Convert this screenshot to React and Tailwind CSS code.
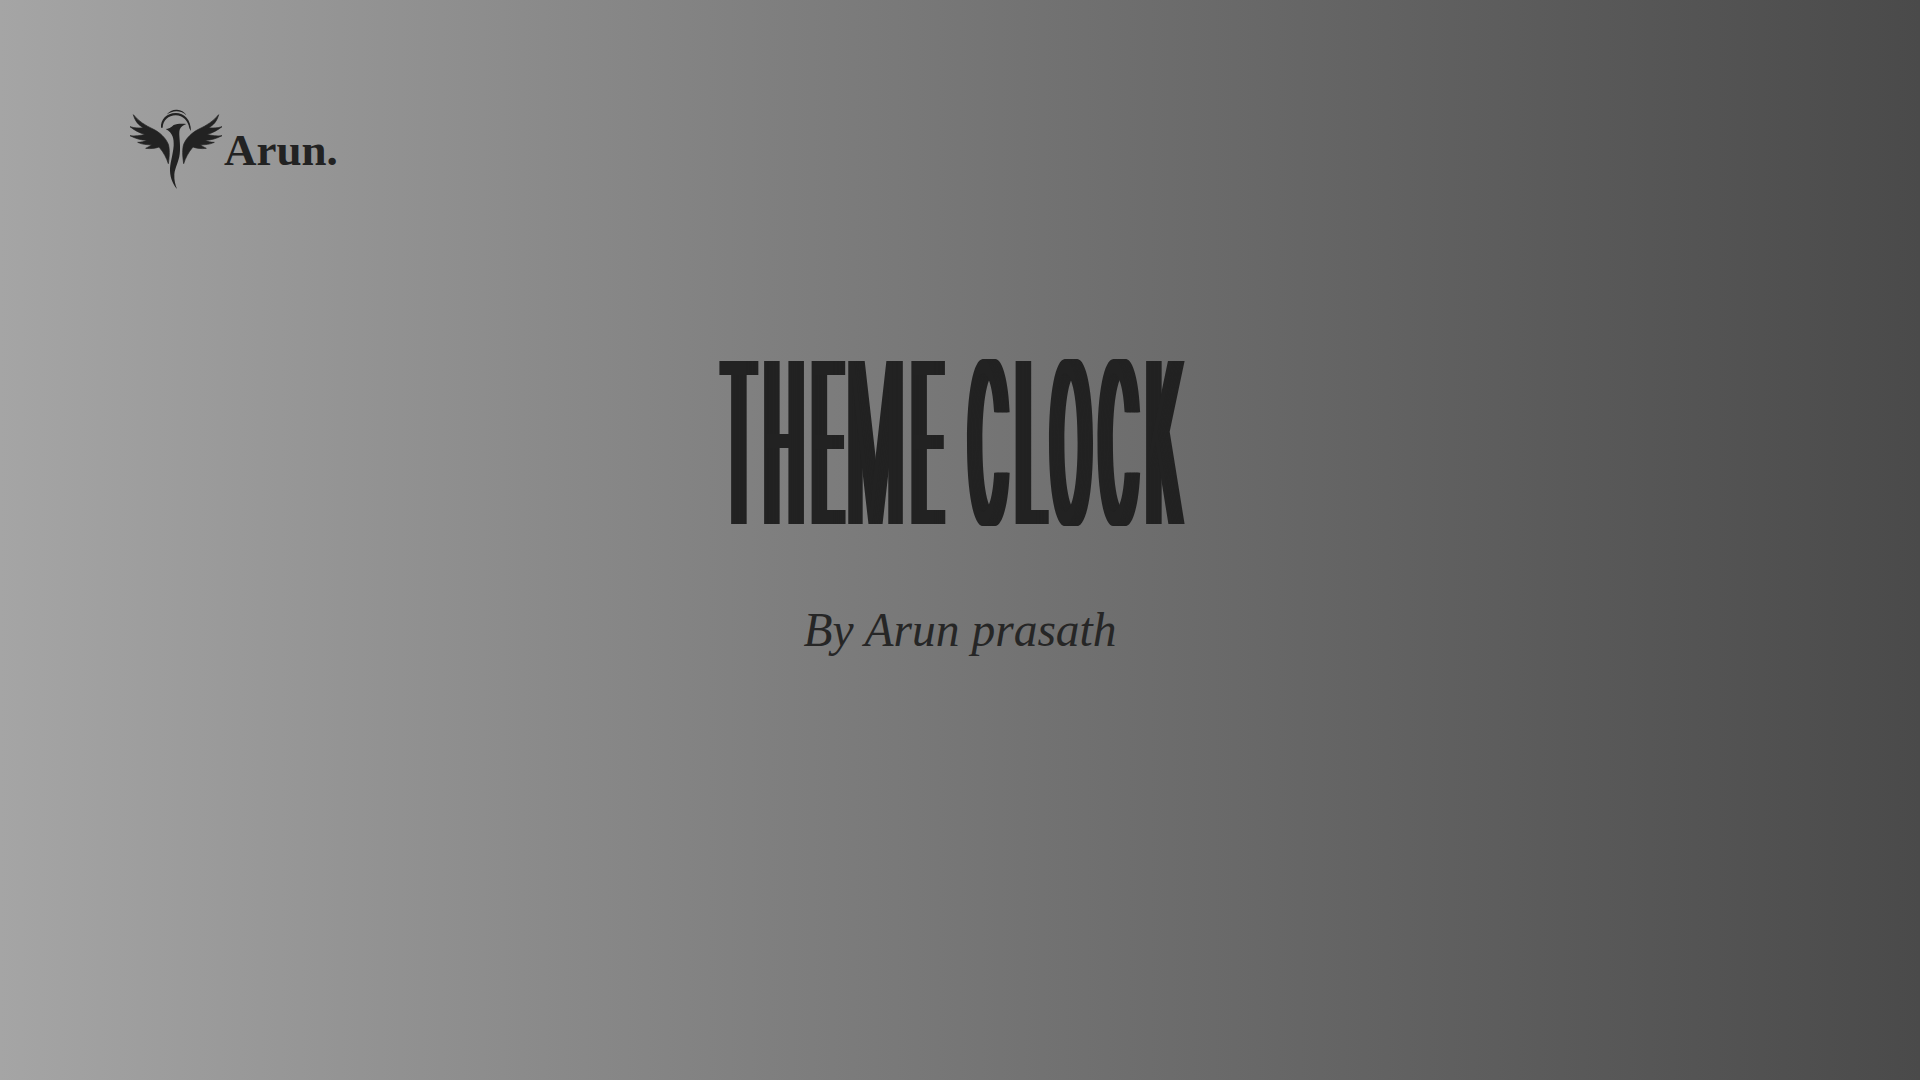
import React from "react";

const wing = "M25 29 C40 48 62 62 84 72 C104 82 122 98 130 118 C134 132 134 150 130 176 C125 160 116 142 102 126 C92 130 76 132 62 130 C68 127 74 124 80 119 C66 120 50 118 38 112 C48 112 58 110 66 106 C48 106 30 100 15 92 C30 94 46 92 60 88 C44 84 28 76 15 65 C28 69 42 70 55 68 C40 60 30 48 25 29 Z";

function Logo() {
  return (
    <svg width="105" height="85" viewBox="0 0 315 255" className="shrink-0" fill="#222222" stroke="#222222" strokeWidth="2" strokeLinejoin="round">
      <path strokeWidth="0" d="M108 68 C106 44 125 24 152 24 C178 24 198 44 198 78 L193 70 C190 48 174 31 152 31 C130 31 114 46 113 68 Z" />
      <path strokeWidth="0" d="M124 30 C132 18 146 13 156 14 C168 15 178 20 184 30 C174 22 164 19 154 19 C144 19 134 23 124 30 Z" />
      <path strokeWidth="0" d="M122 72 C130 72 138 68 146 60 C156 56 170 55 184 57 C174 61 167 66 164 74 C160 88 168 118 164 148 C161 172 150 188 148 208 C147 226 151 240 156 252 C146 240 136 222 135 198 C134 176 144 150 146 122 C147 102 144 84 122 72 Z" />
      <path d={wing} />
      <path d={wing} transform="translate(306 0) scale(-1 1)" />
    </svg>
  );
}

export default function App() {
  return (
    <div className="min-h-screen overflow-x-clip bg-gradient-to-r from-[#a5a5a5] to-[#4a4a4a] text-[#222222] px-[125px] pt-[105px] font-['Liberation_Serif',serif]">
      <div className="flex items-end h-[85px]">
        <Logo />
        <span className="text-[45px] font-bold leading-none -ml-[6px] mb-[17px]">Arun.</span>
      </div>
      <div className="-mx-[125px] pr-[19px] mt-[133px] h-[240px] flex justify-center">
        <h1 className="whitespace-nowrap scale-x-[.227] text-[224px] leading-[240px] font-light tracking-[44px] [word-spacing:-32px] font-['Inter',sans-serif] [text-shadow:6px_0_#222,12px_0_#222,18px_0_#222,24px_0_#222,30px_0_#222,36px_0_#222,42px_0_#222,48px_0_#222,53px_0_#222]">
          THE
          <span className="inline-block origin-left scale-x-[1.23] -ml-[21px] mr-[37px] [text-shadow:6px_0_#222,12px_0_#222,18px_0_#222,24px_0_#222,30px_0_#222,36px_0_#222]">M</span>
          E C
          <span className="inline-block -mr-[16px]">L</span>
          OCK
        </h1>
      </div>
      <p className="mt-[37px] text-center -mx-[125px] italic text-[47.5px] leading-[60px] text-[#262626]">By Arun prasath</p>
    </div>
  );
}
